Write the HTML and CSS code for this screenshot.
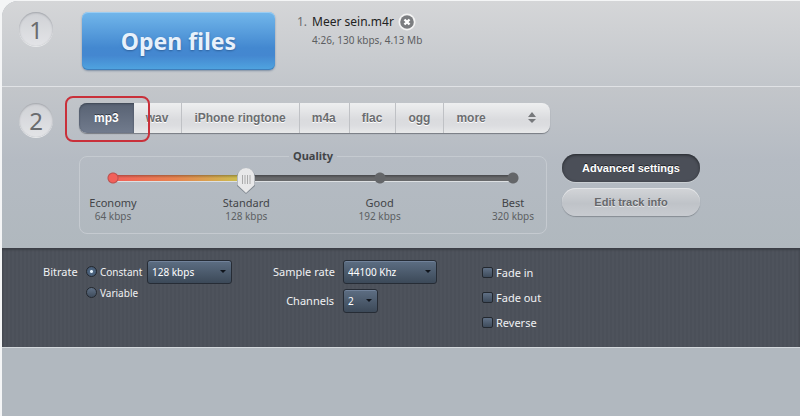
FILE: index.html
```html
<!DOCTYPE html>
<html lang="en">
<head>
    <meta charset="utf-8">
    <meta name="viewport" content="width=device-width, initial-scale=1.0">
    <title>Audio Converter</title>
    <link rel="stylesheet" href="styles.css">
</head>
<body>
    <main class="app">
        <section class="step step-open">
            <div class="step-number">1</div>
            <button type="button" class="open-button">Open files</button>
            <ol class="file-list">
                <li>
                    <span class="file-index">1.</span>
                    <div>
                        <div class="file-name">
                            <span>Meer sein.m4r</span>
                            <button type="button" class="remove-button" aria-label="Remove file">
                                <svg width="18" height="18" viewBox="0 0 18 18">
                                    <circle cx="9" cy="9" r="8.5" fill="#f4f4f4"/>
                                    <circle cx="9" cy="9" r="6.8" fill="#7b7d80"/>
                                    <path d="M6.5 6.5l5 5M11.5 6.5l-5 5" stroke="#fff" stroke-width="2.4"/>
                                </svg>
                            </button>
                        </div>
                        <div class="file-info">4:26, 130 kbps, 4.13 Mb</div>
                    </div>
                </li>
            </ol>
        </section>

        <section class="step step-format">
            <div class="step-number">2</div>
            <div class="format-content">
                <div class="tabs">
                    <button type="button" class="tab active">mp3</button>
                    <button type="button" class="tab">wav</button>
                    <button type="button" class="tab">iPhone ringtone</button>
                    <button type="button" class="tab">m4a</button>
                    <button type="button" class="tab">flac</button>
                    <button type="button" class="tab">ogg</button>
                    <button type="button" class="tab tab-more">more
                        <svg width="10" height="12" viewBox="0 0 10 12">
                            <path d="M1 5l4-5 4 5zM1 7l4 4 4-4z" fill="#77797c"/>
                        </svg>
                    </button>
                    <div class="highlight"></div>
                </div>
                <div class="quality-row">
                    <fieldset class="quality">
                        <legend>Quality</legend>
                        <input type="range" class="slider" min="0" max="3" value="1" aria-label="Quality">
                        <div class="marks">
                            <div class="mark">Economy<small>64 kbps</small></div>
                            <div class="mark">Standard<small>128 kbps</small></div>
                            <div class="mark">Good<small>192 kbps</small></div>
                            <div class="mark">Best<small>320 kbps</small></div>
                        </div>
                    </fieldset>
                    <div class="actions">
                        <button type="button" class="pill pill-dark">Advanced settings</button>
                        <button type="button" class="pill">Edit track info</button>
                    </div>
                </div>
            </div>
        </section>

        <section class="advanced">
            <div class="bitrate">
                <span class="label">Bitrate</span>
                <div class="radios">
                    <label><input type="radio" name="mode" checked>Constant</label>
                    <label><input type="radio" name="mode">Variable</label>
                </div>
                <div class="select select-bitrate">
                    <select aria-label="Bitrate"><option>128 kbps</option></select>
                </div>
            </div>
            <div class="sampling">
                <label class="label" for="rate">Sample rate</label>
                <div class="select select-rate">
                    <select id="rate"><option>44100 Khz</option></select>
                </div>
                <label class="label" for="channels">Channels</label>
                <div class="select select-channels">
                    <select id="channels"><option>2</option></select>
                </div>
            </div>
            <div class="effects">
                <label><input type="checkbox">Fade in</label>
                <label><input type="checkbox">Fade out</label>
                <label><input type="checkbox">Reverse</label>
            </div>
        </section>
    </main>
</body>
</html>
```
FILE: styles.css
```css
* {
    box-sizing: border-box;
}

body {
    margin: 0;
    background: #f4f5f6;
    font-family: "Noto Sans", sans-serif;
    font-size: 12px;
    line-height: 16px;
    color: #424447;
}

button, select, input {
    margin: 0;
    font-family: inherit;
    cursor: pointer;
}

button {
    padding: 0;
    border: none;
    background: none;
}

.app {
    min-height: calc(100vh - 1px);
    margin: 1px 0 0 2px;
    background: #b1b8bf;
    border-top-left-radius: 16px;
    overflow: hidden;
}

.step {
    display: flex;
    align-items: flex-start;
    padding-left: 17px;
}

.step-open {
    height: 86px;
    padding-top: 11px;
    background: linear-gradient(#d5d6d8, #c2c6cb);
    border-bottom: 1px solid #e0e2e5;
}

.step-format {
    padding-top: 16px;
    padding-bottom: 14px;
    background: linear-gradient(#c3c6ca, #b5bbc3 45%, #b0b8be);
}

.step-number {
    flex: none;
    width: 34px;
    height: 34px;
    border-radius: 50%;
    background: linear-gradient(#cfd1d5, #e3e4e7);
    box-shadow: inset 0 1px 2px #9fa2a8, 0 1px 0 #e8e9eb;
    color: #6a6c6e;
    font-size: 24px;
    line-height: 36px;
    text-align: center;
}

.open-button {
    flex: none;
    width: 193px;
    height: 58px;
    margin-left: 29px;
    border-radius: 6px;
    background: linear-gradient(#72b7eb, #4388d0 62%, #4487d0 75%, #50a5e0);
    box-shadow: inset 0 1px 0 #9bcdf2, inset 0 -1px 0 #3f7fbb, 0 1px 2px #7f8fa3;
    color: #e7f1fb;
    font-size: 23px;
    font-weight: bold;
    text-shadow: 0 1px 2px #2d609c;
}

.file-list {
    margin: 0 0 0 22px;
    padding: 0;
    list-style: none;
}

.file-list li {
    display: flex;
    gap: 5px;
}

.file-index {
    font-size: 12px;
    line-height: 20px;
    color: #6a6c6f;
}

.file-name {
    display: flex;
    align-items: center;
    gap: 4px;
    height: 20px;
    font-size: 12px;
    color: #222;
}

.remove-button, .remove-button svg {
    display: block;
}

.file-info {
    font-size: 10px;
    color: #5c5e61;
}

.format-content {
    flex: 1;
    margin-left: 26px;
}

.tabs {
    position: relative;
    display: flex;
    width: 471px;
    height: 30px;
    border-radius: 8px;
    background: linear-gradient(#eeeff0, #dadbde 55%, #dcdde0 75%, #e8e9ea);
    box-shadow: 0 1px 1px #777b81;
}

.tab {
    padding: 0 13px 0 12px;
    border-right: 1px solid #bfc1c5;
    color: #6b6d70;
    font-family: "Liberation Sans", sans-serif;
    font-size: 12px;
    font-weight: bold;
    text-shadow: 0 1px 0 #fff;
    white-space: nowrap;
}

.tab.active {
    padding: 0 15px;
    border-right: none;
    border-radius: 8px 0 0 8px;
    background: linear-gradient(#586273, #717b8d);
    box-shadow: inset 0 1px 2px #3e4653;
    color: #fff;
    text-shadow: 0 -1px 0 #343b46;
}

.tab-more {
    flex: 1;
    display: flex;
    align-items: center;
    justify-content: space-between;
    border-right: none;
}

/* red frame around the selected format */
.highlight {
    position: absolute;
    top: -7px;
    left: -14px;
    width: 85px;
    height: 46px;
    border: 2px solid #c9303a;
    border-radius: 8px;
    pointer-events: none;
}

.quality-row {
    display: flex;
    align-items: flex-start;
    gap: 15px;
    margin-top: 15px;
}

.quality {
    width: 468px;
    min-width: 0;
    margin: 0;
    padding: 0 3px 11px;
    border: 1px solid #c5cad0;
    border-radius: 8px;
}

.quality legend {
    margin: 0 auto;
    padding: 0 4px;
    font-size: 11px;
    font-weight: bold;
    text-align: center;
}

.slider {
    -webkit-appearance: none;
    appearance: none;
    display: block;
    width: calc(100% - 42px);
    height: 28px;
    margin: 2px 21px;
    background:
        radial-gradient(circle, #f2605a 4px, #b9504e 5px, transparent 6px) 3px 6px / 12px 12px no-repeat,
        radial-gradient(circle, #646669 5px, transparent 6px) 66.6% 6px / 12px 12px no-repeat,
        radial-gradient(circle, #646669 5px, transparent 6px) calc(100% - 3px) 6px / 12px 12px no-repeat,
        linear-gradient(#0004, #0000) 9px 9px / 33% 3px no-repeat,
        linear-gradient(90deg, #f2605a, #e7834f 45%, #c6c850) 9px 9px / 33% 6px no-repeat,
        linear-gradient(#48494c, #68696b 3px, #68696b 6px, #dde0e3 6px) 9px 9px / calc(100% - 18px) 7px no-repeat;
}

.slider::-webkit-slider-thumb {
    -webkit-appearance: none;
    width: 18px;
    height: 28px;
    background: url("data:image/svg+xml,%3Csvg xmlns='http://www.w3.org/2000/svg' viewBox='0 0 18 28'%3E%3Cpath d='M0 11a9 9 0 0 1 18 0v9l-9 8-9-8z' fill='%23808890'/%3E%3Cpath d='M.5 10.5a8.5 8.5 0 0 1 17 0v8.500l-8.500 8-8.500-8z' fill='%23e8e8e9'/%3E%3Cpath d='M5.500 9v9M8 9v9M10.500 9v9M13 9v9' stroke='%23aaa'/%3E%3C/svg%3E") center / 18px 28px no-repeat;
}

.marks {
    display: flex;
    justify-content: space-between;
}

.mark {
    width: 60px;
    font-size: 11px;
    line-height: 14px;
    text-align: center;
}

.mark small {
    display: block;
    color: #5c5f62;
    font-size: 10px;
    line-height: 12px;
}

.actions {
    display: flex;
    flex-direction: column;
    gap: 6px;
    margin-top: 6px;
}

.pill {
    width: 138px;
    height: 28px;
    border-radius: 14px;
    background: linear-gradient(#d3d5d8, #bfc3c8 55%, #c8cbd0);
    box-shadow: inset 0 1px 0 #e3e5e7, 0 1px 1px #868c93;
    color: #66686b;
    font-family: "Liberation Sans", sans-serif;
    font-size: 11px;
    font-weight: bold;
    text-shadow: 0 1px 0 #e5e6e8;
}

.pill-dark {
    background: #4b4f58;
    box-shadow: inset 0 1px 3px #24272c, 0 1px 0 #c9ced2;
    color: #fff;
    text-shadow: 0 -1px 0 #1e2126;
}

.advanced {
    display: flex;
    align-items: flex-start;
    height: 100px;
    padding: 12px 16px 0 41px;
    background: repeating-linear-gradient(90deg, #4b5059 0 2px, #4e535c 2px 4px);
    border-bottom: 1px solid #d3d8dc;
    box-shadow: inset 0 2px 2px #3b3f46;
    color: #f0f1f3;
}

.label {
    font-size: 11px;
    line-height: 24px;
    white-space: nowrap;
}

.bitrate {
    display: grid;
    grid-template-columns: 43px 61px auto;
    width: 230px;
}

.radios label, .effects label {
    display: flex;
    align-items: center;
    white-space: nowrap;
}

.radios label {
    gap: 3px;
    height: 21px;
    font-size: 10px;
}

.radios {
    padding-top: 1px;
}

.sampling {
    display: grid;
    grid-template-columns: 61px auto;
    gap: 5px 9px;
    width: 209px;
    text-align: right;
}

.effects label {
    gap: 3px;
    height: 25px;
    font-size: 11px;
}

input[type="radio"], input[type="checkbox"] {
    -webkit-appearance: none;
    appearance: none;
    flex: none;
    width: 11px;
    height: 11px;
    border: 1px solid #23282f;
    background: linear-gradient(#607085, #3e4b5b);
}

input[type="radio"] {
    border-radius: 50%;
}

input[type="radio"]:checked {
    background: radial-gradient(circle, #e6f1fb 1px, #4d6580 2px, #405168);
}

input[type="checkbox"] {
    border-radius: 2px;
}

.select {
    position: relative;
    height: 24px;
}

.select::after {
    content: "";
    position: absolute;
    top: 10px;
    right: 6px;
    border: 3px solid transparent;
    border-top: 3px solid #10151c;
    pointer-events: none;
}

.select select {
    -webkit-appearance: none;
    appearance: none;
    display: block;
    width: 100%;
    height: 24px;
    padding: 0 4px;
    border: 1px solid #262c35;
    border-radius: 3px;
    background: linear-gradient(#5d6e83, #3c4958);
    box-shadow: inset 0 1px 0 #71829a;
    color: #fff;
    font-size: 10px;
}

.select-bitrate {
    width: 85px;
}

.select-rate {
    width: 94px;
}

.select-channels {
    width: 35px;
}
```
